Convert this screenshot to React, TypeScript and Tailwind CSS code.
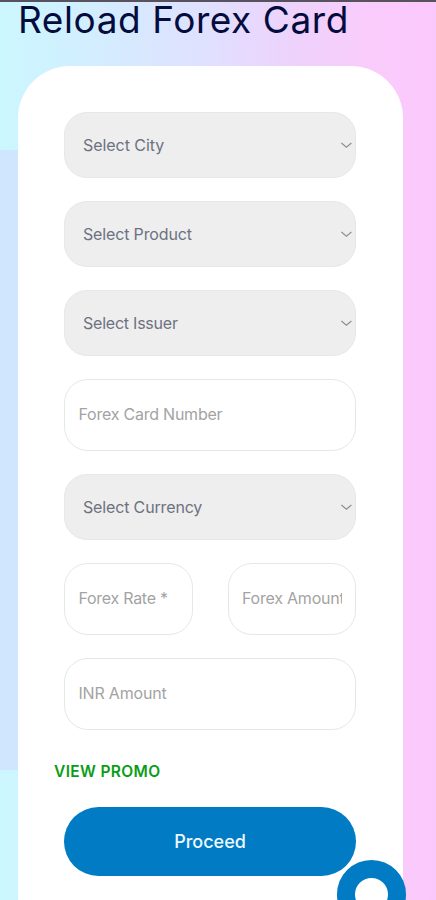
import React from 'react';

function Chevron() {
  return (
    <svg width="12" height="8" viewBox="0 0 12 8" fill="none" stroke="#8f8f8f" strokeWidth="1.15">
      <path d="M1.4 2 6.4 6.2l5-4.2" />
    </svg>
  );
}

function SelectField({ label, tracking }: { label: string; tracking: string }) {
  return (
    <button
      type="button"
      className="flex h-[66px] w-full shrink-0 items-center justify-between rounded-[23px] border border-[#e3e8e8] bg-[#eeeeee] pr-[3px] pl-[18px] text-left text-[16px] font-[370] text-[#6c7280]"
    >
      <span className={tracking}>{label}</span>
      <Chevron />
    </button>
  );
}

function TextField({ label, tracking }: { label: string; tracking: string }) {
  return (
    <input
      aria-label={label}
      placeholder={label}
      className={`h-[72px] w-full min-w-0 shrink-0 rounded-[24px] border border-[#e3e9e9] bg-white px-[13.5px] pb-[2px] text-[16px] font-[370] text-[#6c7280] placeholder:text-[#a3a3a3] placeholder:opacity-100 ${tracking}`}
    />
  );
}

export default function App() {
  return (
    <div className="relative h-[900px] w-[436px] overflow-hidden bg-[linear-gradient(90deg,#ccf7ff_0%,#d0f0ff_16%,#dfe1ff_46%,#eed2fc_68%,#f9ccfb_84%,#fbc8fc_100%)] font-['Inter','Noto_Sans',sans-serif]">
      <div className="absolute top-[150px] left-0 h-[620px] w-[60px] bg-[#d0e6ff]" />
      <div className="relative flex h-full flex-col border-t-2 border-[#57525e] pr-[33px] pl-[18px]">
        <h1 className="h-[64px] shrink-0 text-[37px] leading-[36px] font-normal tracking-[0.57px] whitespace-nowrap text-[#030c3d]">
          Reload Forex Card
        </h1>
        <main className="flex h-[840px] shrink-0 flex-col gap-[23px] rounded-t-[52px] bg-white pt-[46px] pr-[47px] pl-[46px]">
          <SelectField label="Select City" tracking="tracking-[-0.05px]" />
          <SelectField label="Select Product" tracking="tracking-[-0.15px]" />
          <SelectField label="Select Issuer" tracking="tracking-[-0.23px]" />
          <TextField label="Forex Card Number" tracking="tracking-[-0.23px]" />
          <SelectField label="Select Currency" tracking="tracking-[-0.15px]" />
          <div className="grid grid-cols-2 gap-[35px]">
            <TextField label="Forex Rate *" tracking="tracking-[-0.28px]" />
            <TextField label="Forex Amount *" tracking="tracking-[-0.22px]" />
          </div>
          <TextField label="INR Amount" tracking="tracking-[-0.2px]" />
          <a className="mt-[7px] -ml-[10px] h-[24px] text-[15.5px] leading-[24px] font-semibold text-[#089d16]">
            <span className="tracking-[0.35px]">VIEW PROMO</span>
          </a>
          <button type="button" className="h-[69px] w-full shrink-0 rounded-full bg-[#007bc4] pb-[1px] text-[18px] font-medium text-[#eef8ff]">
            <span>Proceed</span>
          </button>
        </main>
      </div>
      <div className="absolute top-[860px] left-[337px] h-[69px] w-[69px] rounded-full border-[18px] border-[#007bc4] bg-white" />
    </div>
  );
}
